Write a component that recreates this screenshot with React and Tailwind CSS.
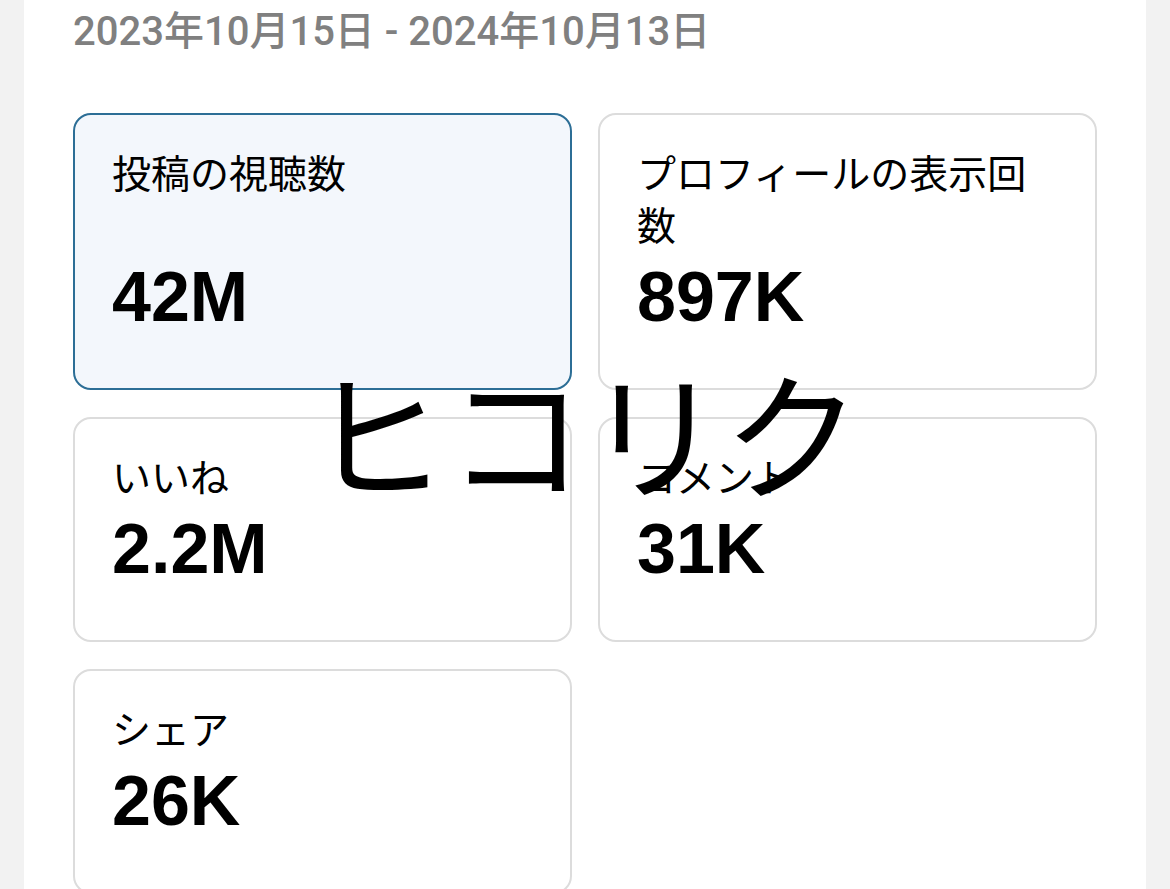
const stats = [
  { label: '投稿の視聴数', value: '42M', active: true },
  { label: 'プロフィールの表示回数', value: '897K' },
  { label: 'いいね', value: '2.2M' },
  { label: 'コメント', value: '31K' },
  { label: 'シェア', value: '26K' },
];

const jp = "font-['Noto_Sans_CJK_JP','Noto_Sans',sans-serif]";

function StatCard({ label, value, active }) {
  return (
    <div
      className={`flex flex-col justify-between rounded-[18px] border-2 pt-[30px] pb-[57px] pl-[37px] pr-[48px] ${
        active ? 'border-[#2c6e96] bg-[#f3f7fc]' : 'border-[#dcdcdc] bg-white'
      }`}
    >
      <p className={`${jp} text-[39px] leading-[52px] text-black`}>{label}</p>
      <p className="mt-[14px] font-['Liberation_Sans',Arial,sans-serif] text-[70px] font-bold leading-[68px] text-black">
        {value}
      </p>
    </div>
  );
}

export default function App() {
  return (
    <div className="relative h-[889px] overflow-hidden bg-[#f2f2f2]">
      <div className="mx-[24px] h-full bg-white px-[49px] pt-[8px]">
        <p className="font-['Roboto','Noto_Sans_CJK_JP',sans-serif] text-[40px] font-medium leading-[48px] text-[#808080]">
          2023年10月15日 - 2024年10月13日
        </p>

        <div className="mt-[57px] grid grid-cols-2 gap-x-[26px] gap-y-[27px]">
          {stats.map(s => (
            <StatCard key={s.label} {...s} />
          ))}
        </div>
      </div>

      {/* watermark */}
      <div className="pointer-events-none absolute inset-x-0 top-[344px] text-center">
        <span className={`${jp} text-[138px] leading-[170px] text-black`}>ヒコリク</span>
      </div>
    </div>
  );
}
